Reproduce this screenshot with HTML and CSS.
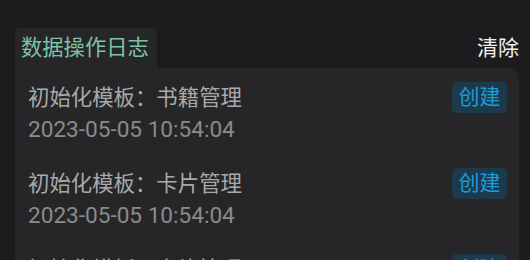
FILE: index.html
```html
<!DOCTYPE html>
<html lang="zh">
<head>
<meta charset="utf-8">
<link rel="stylesheet" href="styles.css">
</head>
<body>
<div class="page">
  <div class="header">
    <div class="tab">数据操作日志</div>
    <div class="clear">清除</div>
  </div>
  <div class="panel">
    <div class="item">
      <div class="info">
        <div class="title">初始化模板：书籍管理</div>
        <div class="date">2023-05-05 10:54:04</div>
      </div>
      <span class="badge">创建</span>
    </div>
    <div class="item">
      <div class="info">
        <div class="title">初始化模板：卡片管理</div>
        <div class="date">2023-05-05 10:54:04</div>
      </div>
      <span class="badge">创建</span>
    </div>
    <div class="item">
      <div class="info">
        <div class="title">初始化模板：卡片管理</div>
        <div class="date">2023-05-05 10:54:04</div>
      </div>
      <span class="badge">创建</span>
    </div>
  </div>
</div>
</body>
</html>
```

FILE: styles.css
```css
html, body {
  margin: 0;
  padding: 0;
  background: #1c1c1e;
  height: 100%;
  overflow: hidden;
}
body {
  font-family: Roboto, "Noto Sans CJK SC", sans-serif;
}
.page {
  padding: 28px 11px 0 15px;
}
.header {
  display: flex;
  justify-content: space-between;
  align-items: center;
}
.tab {
  background: #262628;
  border-radius: 5px 5px 0 0;
  height: 40px;
  line-height: 40px;
  padding: 0 6px 0 6px;
  width: 130px;
  color: #7ec2a6;
  font-size: 21.3px;
}
.clear {
  color: #f0f0f0;
  font-size: 21px;
  line-height: 40px;
}
.panel {
  background: #262628;
  border-radius: 0 10px 0 0;
  height: 300px;
  padding: 0 12px 0 13px;
}
.item {
  display: flex;
  justify-content: space-between;
  align-items: flex-start;
  height: 86px;
  padding-top: 14px;
  box-sizing: border-box;
}
.info {
  padding-top: 2px;
}
.title {
  color: #a9a9a9;
  font-size: 21.4px;
  line-height: 28px;
}
.date {
  color: #8a8a8a;
  font-size: 22.6px;
  line-height: 28px;
  margin-top: 4px;
}
.badge {
  display: inline-block;
  background: #1b3a4b;
  color: #1e9ad8;
  font-size: 21px;
  line-height: 31px;
  height: 31px;
  padding: 0 6px;
  width: 43px;
  text-align: center;
  border-radius: 5px;
}
```
